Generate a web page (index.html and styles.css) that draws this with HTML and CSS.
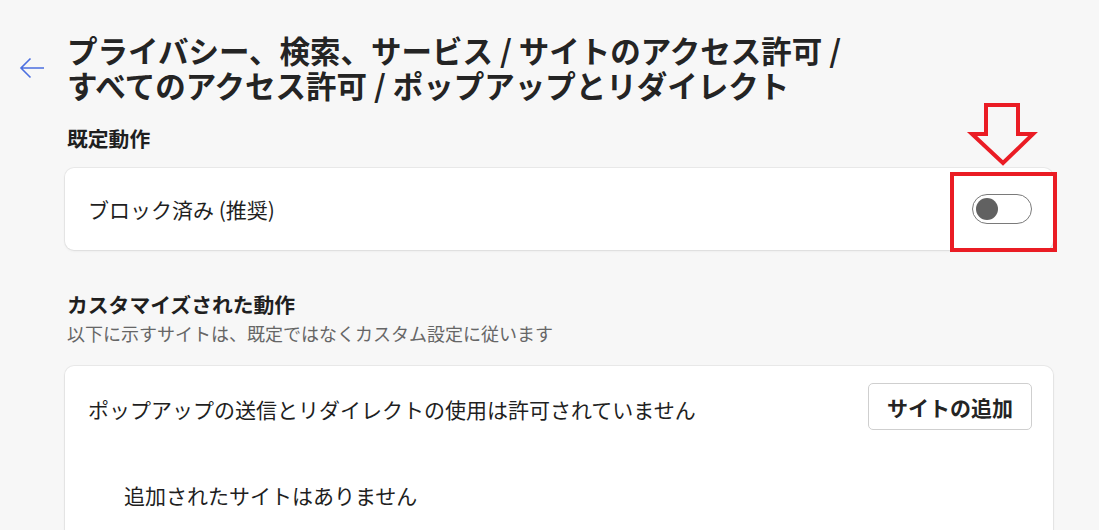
FILE: index.html
```html
<!DOCTYPE html>
<html lang="ja">
<head>
<meta charset="utf-8">
<title>ポップアップとリダイレクト</title>
<link rel="stylesheet" href="styles.css">
</head>
<body>
<div class="page">
  <header class="header">
    <button class="back" aria-label="戻る">
      <svg width="26" height="22" viewBox="0 0 26 22"><path d="M25 11H2M11.5 1.5L2 11l9.5 9.5" fill="none" stroke="#4c6fe0" stroke-width="1.6"/></svg>
    </button>
    <h1 class="title"><span class="tline">プライバシー、検索、サービス / サイトのアクセス許可 /</span><span class="tline">すべてのアクセス許可 / ポップアップとリダイレクト</span></h1>
  </header>
  <main class="content">
    <h2 class="section-title first">既定動作</h2>
    <div class="card card-row">
      <span class="label">ブロック済み (推奨)</span>
      <span class="toggle"><span class="knob"></span></span>
    </div>
    <h2 class="section-title second">カスタマイズされた動作</h2>
    <p class="section-sub">以下に示すサイトは、既定ではなくカスタム設定に従います</p>
    <div class="card card-list">
      <div class="list-head">
        <span class="label">ポップアップの送信とリダイレクトの使用は許可されていません</span>
        <button class="add-btn">サイトの追加</button>
      </div>
      <div class="empty">追加されたサイトはありません</div>
    </div>
  </main>
</div>
<svg class="anno-arrow" width="80" height="70" viewBox="960 100 80 70">
  <path d="M986 105H1018V134H1033L1003 163L972 134H986Z" fill="none" stroke="#ea1c24" stroke-width="4"/>
</svg>
<div class="anno-box"></div>
</body>
</html>
```
FILE: styles.css
```css
* { box-sizing: border-box; }
html, body { margin: 0; padding: 0; }
body {
  background: #f7f7f7;
  font-family: "Noto Sans CJK JP", "Noto Sans", sans-serif;
  color: #1b1b1b;
  width: 1099px;
  height: 530px;
  overflow: hidden;
  position: relative;
}
.page { padding-top: 33px; }
.header {
  display: flex;
  align-items: flex-start;
}
.back {
  margin: 24px 0 0 19px;
  padding: 0;
  border: 0;
  background: none;
  width: 26px;
  height: 22px;
  display: flex;
}
.title {
  margin: 0 0 0 22px;
  font-size: 30.5px;
  line-height: 35px;
  font-weight: 700;
  color: #242424;
  display: flex;
  flex-direction: column;
}
.tline {
  display: block;
  height: 35px;
  white-space: nowrap;
}
.content {
  margin-left: 65px;
  width: 988px;
}
.section-title {
  margin: 0;
  font-size: 20.8px;
  line-height: 28px;
  font-weight: 700;
  color: #1f1f1f;
  padding-left: 2px;
}
.section-title.first { margin-top: 21px; }
.section-title.second { margin-top: 40px; }
.section-sub {
  margin: 2px 0 0;
  padding-left: 2px;
  font-size: 18px;
  line-height: 26px;
  color: #666;
}
.card {
  background: #fff;
  border-radius: 9px;
  box-shadow: 0 0 0 1px rgba(0,0,0,0.05), 0 1px 3px rgba(0,0,0,0.07);
}
.card.card-row {
  margin-top: 16px;
  height: 82px;
  display: flex;
  align-items: center;
  justify-content: space-between;
  padding: 0 21px 0 23px;
}
.label {
  font-size: 21px;
  color: #1f1f1f;
  line-height: 28px;
}
.toggle {
  width: 60px;
  height: 30px;
  border: 1.5px solid #7a7a7a;
  border-radius: 15px;
  display: flex;
  align-items: center;
  padding-left: 3px;
}
.knob {
  width: 22px;
  height: 22px;
  border-radius: 50%;
  background: #616161;
}
.card.card-list {
  margin-top: 20px;
  height: 200px;
  padding: 17px 21px 0 23px;
}
.list-head {
  display: flex;
  align-items: center;
  justify-content: space-between;
}
.list-head .label { margin-top: 4px; }
.add-btn {
  width: 164px;
  height: 47px;
  border: 1px solid #cfcfcf;
  border-radius: 5px;
  background: #fff;
  font-family: inherit;
  font-size: 21px;
  font-weight: 700;
  color: #242424;
  padding: 0;
}
.empty {
  margin-top: 51px;
  padding-left: 36px;
  font-size: 21px;
  line-height: 28px;
  color: #1f1f1f;
}
.anno-arrow {
  position: absolute;
  left: 960px;
  top: 100px;
}
.anno-box {
  position: absolute;
  left: 950px;
  top: 172px;
  width: 107px;
  height: 80px;
  border: 4px solid #ea1c24;
}
```
